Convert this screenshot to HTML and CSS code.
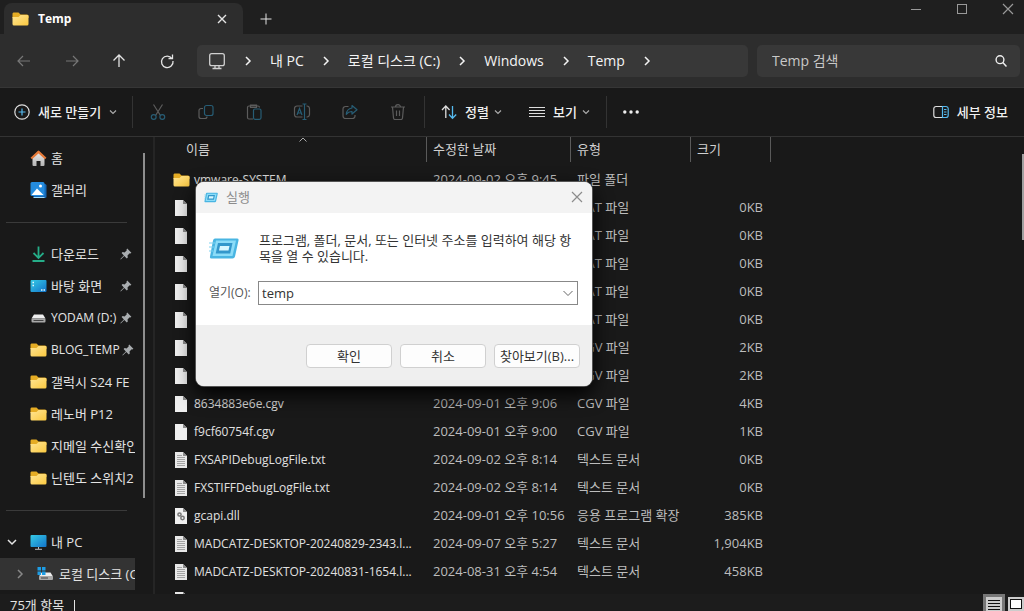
FILE: index.html
```
<!DOCTYPE html>
<html lang="ko">
<head>
<meta charset="utf-8">
<title>Temp</title>
<link rel="stylesheet" href="styles.css">
</head>
<body>
<svg class="defs" aria-hidden="true">
  <defs>
    <linearGradient id="gFolder" x1="0" y1="0" x2="1" y2="1"><stop offset="0" stop-color="#ffe594"/><stop offset="1" stop-color="#fbc940"/></linearGradient>
    <linearGradient id="gBlue" x1="0" y1="0" x2="1" y2="1"><stop offset="0" stop-color="#36cbe6"/><stop offset="1" stop-color="#1273c9"/></linearGradient>
    <linearGradient id="gHouse" x1="0" y1="0" x2="0" y2="1"><stop offset="0" stop-color="#efefef"/><stop offset="1" stop-color="#b4b4b4"/></linearGradient>
    <symbol id="folder" viewBox="0 0 17 14"><path d="M1.500 0.500h5l2 2h6.500a1.500 1.500 0 0 1 1.500 1.500v2h-16v-4a1.500 1.500 0 0 1 1-1.500z" fill="#e5ac24"/><path d="M0.500 5h6l2-2h7a1 1 0 0 1 1 1v8a1.500 1.500 0 0 1-1.500 1.500h-13a1.500 1.500 0 0 1-1.500-1.500z" fill="url(#gFolder)"/></symbol>
    <symbol id="file" viewBox="0 0 12 16"><path d="M0 0h8l4 4v12h-12z" fill="#efefef"/><path d="M8 0l4 4h-4z" fill="#8c8c8c"/></symbol>
    <symbol id="text" viewBox="0 0 12 16"><path d="M0 0h8l4 4v12h-12z" fill="#e8e8e8"/><path d="M8 0l4 4h-4z" fill="#8c8c8c"/><path d="M2 3.500h5M2 5.500h8M2 7.500h8M2 9.500h8M2 11.500h8M2 13.500h8" stroke="#a4a4a4" stroke-width="1"/></symbol>
    <symbol id="dll" viewBox="0 0 12 16"><path d="M0 0h8l4 4v12h-12z" fill="#efefef"/><path d="M8 0l4 4h-4z" fill="#8c8c8c"/><circle cx="4.500" cy="6.500" r="1.600" fill="none" stroke="#777" stroke-width="1.500" /><circle cx="7.500" cy="10" r="1.700" fill="none" stroke="#777" stroke-width="1.500"/></symbol>
    <symbol id="chev" viewBox="0 0 10 10"><path d="M3 1l4 4-4 4" fill="none" stroke="currentColor" stroke-width="1.500"/></symbol>
    <symbol id="down" viewBox="0 0 8 8"><path d="M1 2.500l3 3 3-3" fill="none" stroke="currentColor" stroke-width="1.200"/></symbol>
    <symbol id="x" viewBox="0 0 12 12"><path d="M1 1l10 10M11 1L1 11" fill="none" stroke="currentColor" stroke-width="1.200"/></symbol>
    <symbol id="pin" viewBox="0 0 12 12"><path d="M7.200 0.600l4.200 4.200-1 0.700-0.700-0.300-2.200 2.200 0.300 2-1 1-2.500-2.500-3.300 3.300-0.600 0.200 0.200-0.700 3.300-3.200-2.300-2.400 1-1 2 0.300 2.200-2.200-0.300-0.700z" fill="#a9adb0"/></symbol>
    <symbol id="run" viewBox="0 0 30 21"><path d="M6 0.500h22q2 0 1.500 2l-3.500 16q-0.500 2-2.500 2h-21q-2 0-1.500-2l3-16q0.500-2 2-2z" fill="#49b5e2"/><path d="M7 2.500h20l-3.500 15.500h-20z" fill="#8bdcf8"/><path d="M9 5h14.500l-2.300 10.500h-14.500z" fill="#3397cb"/><path d="M11 8h9.500l-1 4.500h-9.500z" fill="#d9f7ff"/><path d="M0 5h6M0 9h5M0 13h4" stroke="#7fd2f0"/></symbol>
  </defs>
</svg>

<div class="explorer">
  <header class="titlebar">
    <div class="tab">
      <svg class="folder-icon"><use href="#folder"/></svg>
      <span class="tab-title">Temp</span>
      <button class="plain tab-close" aria-label="탭 닫기"><svg class="icon-12" viewBox="0 0 12 12"><path d="M2 2l8 8M10 2l-8 8" stroke="currentColor" stroke-width="1.400"/></svg></button>
    </div>
    <button class="plain new-tab" aria-label="새 탭"><svg class="icon-12" viewBox="0 0 12 12"><path d="M6 0.500v11M0.500 6h11" stroke="currentColor"/></svg></button>
    <div class="window-controls">
      <button class="plain" aria-label="최소화"><svg class="icon-12" viewBox="0 0 12 12"><path d="M1 6.500h10" stroke="currentColor"/></svg></button>
      <button class="plain" aria-label="최대화"><svg class="icon-12" viewBox="0 0 12 12"><rect x="1.500" y="1.500" width="9" height="9" fill="none" stroke="currentColor"/></svg></button>
      <button class="plain" aria-label="닫기"><svg class="icon-12"><use href="#x"/></svg></button>
    </div>
  </header>

  <nav class="navbar">
    <div class="nav-buttons">
      <button class="plain dim" aria-label="뒤로"><svg class="icon-16" viewBox="0 0 16 16"><path d="M14 8H2M7 3L2 8l5 5" fill="none" stroke="currentColor" stroke-width="1.200"/></svg></button>
      <button class="plain dim" aria-label="앞으로"><svg class="icon-16" viewBox="0 0 16 16"><path d="M2 8h12M9 3l5 5-5 5" fill="none" stroke="currentColor" stroke-width="1.200"/></svg></button>
      <button class="plain" aria-label="위로"><svg class="icon-16" viewBox="0 0 16 16"><path d="M8 14V2M2.500 7.500L8 2l5.500 5.500" fill="none" stroke="currentColor" stroke-width="1.300"/></svg></button>
      <button class="plain" aria-label="새로 고침"><svg class="icon-16" viewBox="0 0 16 16"><path d="M13 5.500A5.800 5.800 0 1 0 14 8M13.500 1.500v4h-4" fill="none" stroke="currentColor" stroke-width="1.300"/></svg></button>
    </div>
    <div class="address">
      <svg class="icon-18" viewBox="0 0 18 18"><rect x="1.700" y="1.700" width="14.600" height="12" rx="2" fill="none" stroke="#d0d0d0" stroke-width="1.300"/><path d="M7 14v2.500M11 14v2.500M4.500 16.500h9" stroke="#d0d0d0" stroke-width="1.300"/></svg>
      <svg class="icon-10"><use href="#chev"/></svg>
      <a href="#pc">내 PC</a>
      <svg class="icon-10"><use href="#chev"/></svg>
      <a href="#c">로컬 디스크 (C:)</a>
      <svg class="icon-10"><use href="#chev"/></svg>
      <a href="#windows">Windows</a>
      <svg class="icon-10"><use href="#chev"/></svg>
      <a href="#temp">Temp</a>
      <svg class="icon-10"><use href="#chev"/></svg>
    </div>
    <div class="search">
      <input type="text" placeholder="Temp 검색" aria-label="Temp 검색">
      <svg class="icon-12" viewBox="0 0 12 12"><circle cx="5" cy="4.700" r="3.900" fill="none" stroke="#eee" stroke-width="1.400"/><path d="M7.800 7.500L11.500 11.500" stroke="#eee" stroke-width="1.500"/></svg>
    </div>
  </nav>

  <div class="toolbar">
    <button class="plain tool new">
      <svg class="icon-16" viewBox="0 0 16 16"><circle cx="8" cy="8" r="7.200" fill="none" stroke="#ddd" stroke-width="1.200"/><path d="M8 4.500v7M4.500 8h7" stroke="#55b9ee" stroke-width="1.200"/></svg>
      <span>새로 만들기</span><svg class="icon-8"><use href="#down"/></svg>
    </button>
    <div class="tool-icons">
      <button class="plain" aria-label="잘라내기"><svg class="icon-16" viewBox="0 0 16 16" fill="none"><path d="M3.500 0.500l6.800 10.800M12.500 0.500L5.700 11.300" stroke="#5c5c5c" stroke-width="1.200"/><circle cx="3.700" cy="13" r="2.400" stroke="#275d75" stroke-width="1.200"/><circle cx="12.300" cy="13" r="2.400" stroke="#275d75" stroke-width="1.200"/></svg></button>
      <button class="plain" aria-label="복사"><svg class="icon-16" viewBox="0 0 16 16" fill="none" stroke-width="1.200"><path d="M5 4.500H3A2 2 0 0 0 1 6.500v6a2 2 0 0 0 2 2h4a2 2 0 0 0 2-2" stroke="#5c5c5c"/><rect x="6.500" y="1.500" width="8.500" height="10" rx="2" stroke="#275d75"/></svg></button>
      <button class="plain" aria-label="붙여넣기"><svg class="icon-16" viewBox="0 0 16 16" fill="none" stroke-width="1.200"><path d="M7 15H3a1.500 1.500 0 0 1-1.500-1.500v-10A1.500 1.500 0 0 1 3 2h9q1.500 0 1.500 1.500M4.500 3.500v-2.500h6v2.500z" stroke="#5c5c5c"/><rect x="7.500" y="5" width="7.500" height="10.300" rx="1.500" stroke="#275d75"/></svg></button>
      <button class="plain" aria-label="이름 바꾸기"><svg class="icon-18" viewBox="0 0 18 18" fill="none" stroke-width="1.200"><path d="M9.500 3H4A2.500 2.500 0 0 0 1.500 5.500v6A2.500 2.500 0 0 0 4 14h5.500M13.500 3A2.800 2.800 0 0 1 16.500 5.500v6a2.800 2.800 0 0 1-3 2.500" stroke="#5c5c5c"/><path d="M11.500 1v15.500M9.500 1h4M9.500 16.500h4M4 12l2.500-6.500L9 12M5 10h3" stroke="#275d75"/></svg></button>
      <button class="plain" aria-label="공유"><svg class="icon-16" viewBox="0 0 16 16" fill="none" stroke-width="1.200"><path d="M6.500 2.500H3.500a2.500 2.500 0 0 0-2.500 2.500v7A2.500 2.500 0 0 0 3.500 14.500h7a2.500 2.500 0 0 0 2.500-2.500v-1" stroke="#5c5c5c"/><path d="M10 1.500l5 4.300-5 4.200V7.500Q6.500 7.300 4.300 10.300Q4.700 4.800 10 4z" stroke="#275d75" stroke-linejoin="round"/></svg></button>
      <button class="plain" aria-label="삭제"><svg class="icon-16" viewBox="0 0 16 16" fill="none" stroke="#5c5c5c" stroke-width="1.200"><path d="M1 3h14M5.500 3a2.500 2.300 0 0 1 5 0M2.500 3l1 11q0.200 1.500 1.500 1.500h6q1.300 0 1.500-1.500l1-11M6.500 6.500v5.500M9.500 6.500v5.500"/></svg></button>
    </div>
    <div class="tool-menus">
      <button class="plain tool"><svg class="icon-16" viewBox="0 0 16 16" fill="none" stroke-width="1.300"><path d="M4.800 14V2M1 6l3.800-4 3.800 4" stroke="#ddd"/><path d="M11.500 2v12M8 10.500l3.500 3.700 3.700-3.700" stroke="#55b9ee"/></svg><span>정렬</span><svg class="icon-8"><use href="#down"/></svg></button>
      <button class="plain tool"><svg class="icon-16" viewBox="0 0 16 16"><path d="M0 3.500h16M0 6.500h16M0 9.500h16M0 12.500h16" stroke="#ddd"/></svg><span>보기</span><svg class="icon-8"><use href="#down"/></svg></button>
    </div>
    <button class="plain more" aria-label="자세히"><svg class="icon-16" viewBox="0 0 16 16"><circle cx="1.800" cy="8" r="1.700" fill="#eee"/><circle cx="8" cy="8" r="1.700" fill="#eee"/><circle cx="14.200" cy="8" r="1.700" fill="#eee"/></svg></button>
    <button class="plain tool details"><svg class="icon-16" viewBox="0 0 16 16" fill="none" stroke-width="1.200"><path d="M9 2.500H3A2.200 2.200 0 0 0 0.800 4.700v6.600A2.200 2.200 0 0 0 3 13.500h6" stroke="#ddd"/><path d="M9.500 2.500h3.500a2.200 2.200 0 0 1 2.200 2.200v6.600a2.200 2.200 0 0 1-2.200 2.200H9.500zM11 5.500h2.500M11 8h2.500M11 10.500h2.500" stroke="#55b9ee"/></svg><span>세부 정보</span></button>
  </div>

  <main class="content">
    <aside class="sidebar">
      <div class="tree">
        <a class="side" href="#home"><svg class="side-icon" viewBox="0 0 16 16"><path d="M2 7l6-6 6 6v8a1 1 0 0 1-1 1H10v-5H6v5H3a1 1 0 0 1-1-1z" fill="url(#gHouse)"/><path d="M0.800 8.500L8 1.800l7.200 6.700" fill="none" stroke="#e57938" stroke-width="2.300" stroke-linejoin="round"/></svg><span>홈</span></a>
        <a class="side" href="#gallery"><svg class="side-icon" viewBox="0 0 16 16"><rect x="3" y="2" width="13" height="14" rx="1.500" fill="#1567b5"/><rect x="0" y="0" width="14" height="14" rx="1.500" fill="#248cdf"/><path d="M1 13l5.500-6.500L13 13z" fill="#fff"/><circle cx="10" cy="4" r="1.500" fill="#fff"/><path d="M3 15.500h11" stroke="#9edcff"/></svg><span>갤러리</span></a>
        <hr>
        <a class="side" href="#downloads"><svg class="side-icon" viewBox="0 0 16 16"><path d="M8 0.500v11M3 7l5 5 5-5M2 15h12" fill="none" stroke="#25ad88" stroke-width="1.800"/></svg><span>다운로드</span><svg class="pin"><use href="#pin"/></svg></a>
        <a class="side" href="#desktop"><svg class="side-icon" viewBox="0 0 16 16"><rect y="2" width="16" height="12" rx="1" fill="url(#gBlue)"/><path d="M2 4.500h1.500M2 7.500h1.500M10.500 12h1.500M13 12h1.500" stroke="#e4f8ff" stroke-width="1.500"/></svg><span>바탕 화면</span><svg class="pin"><use href="#pin"/></svg></a>
        <a class="side latin" href="#d"><svg class="side-icon" viewBox="0 0 16 16"><path d="M3.500 4.500h9l2.500 4H1z" fill="#eee"/><rect x="1" y="8.500" width="14" height="4" rx="1" fill="#a8a8a8"/><path d="M3 10.500h10" stroke="#444"/></svg><span>YODAM (D:)</span><svg class="pin"><use href="#pin"/></svg></a>
        <a class="side latin" href="#blog"><svg class="folder-icon"><use href="#folder"/></svg><span>BLOG_TEMP</span><svg class="pin"><use href="#pin"/></svg></a>
        <a class="side" href="#s24"><svg class="folder-icon"><use href="#folder"/></svg><span>갤럭시 S24 FE</span></a>
        <a class="side" href="#p12"><svg class="folder-icon"><use href="#folder"/></svg><span>레노버 P12</span></a>
        <a class="side" href="#mail"><svg class="folder-icon"><use href="#folder"/></svg><span>지메일 수신확인</span></a>
        <a class="side" href="#switch"><svg class="folder-icon"><use href="#folder"/></svg><span>닌텐도 스위치2</span></a>
        <hr>
        <a class="side root" href="#pc"><svg class="icon-10 open"><use href="#chev"/></svg><svg class="side-icon" viewBox="0 0 16 16"><rect y="1" width="16" height="12" rx="1" fill="url(#gBlue)"/><path d="M8 13v2M4.500 15.300h7" stroke="#bbb"/></svg><span>내 PC</span></a>
        <a class="side child selected" href="#c"><svg class="icon-10"><use href="#chev"/></svg><svg class="side-icon" viewBox="0 0 16 16"><path d="M4 6.500h9l2.500 4H1.500z" fill="#eee"/><rect x="1.500" y="10" width="14" height="4" rx="1" fill="#a8a8a8"/><path d="M3.500 12h7" stroke="#444"/><path d="M0 1h3.500v3.500H0zM4.500 1H8v3.500H4.500zM0 5.500h3.500V9H0zM4.500 5.500H8V9H4.500z" fill="#1d9de5"/></svg><span>로컬 디스크 (C:)</span></a>
      </div>
      <div class="side-scroll"></div>
    </aside>

    <div class="files">
      <table>
        <colgroup><col class="c-name"><col class="c-date"><col class="c-type"><col class="c-size"></colgroup>
        <thead><tr>
          <th class="name-head"><div>이름<svg class="sort" viewBox="0 0 8 5"><path d="M0.500 4.500L4 1l3.500 3.500" fill="none" stroke="#aaa"/></svg></div></th>
          <th><div>수정한 날짜</div></th><th><div>유형</div></th><th><div>크기</div></th>
        </tr></thead>
        <tbody>
          <tr><td><div class="name"><svg class="folder-icon"><use href="#folder"/></svg><span>vmware-SYSTEM</span></div></td><td>2024-09-02 오후 9:45</td><td>파일 폴더</td><td></td></tr>
          <tr><td><div class="name"><svg class="file-icon"><use href="#file"/></svg></div></td><td></td><td>DAT 파일</td><td>0KB</td></tr>
          <tr><td><div class="name"><svg class="file-icon"><use href="#file"/></svg></div></td><td></td><td>DAT 파일</td><td>0KB</td></tr>
          <tr><td><div class="name"><svg class="file-icon"><use href="#file"/></svg></div></td><td></td><td>DAT 파일</td><td>0KB</td></tr>
          <tr><td><div class="name"><svg class="file-icon"><use href="#file"/></svg></div></td><td></td><td>DAT 파일</td><td>0KB</td></tr>
          <tr><td><div class="name"><svg class="file-icon"><use href="#file"/></svg></div></td><td></td><td>DAT 파일</td><td>0KB</td></tr>
          <tr><td><div class="name"><svg class="file-icon"><use href="#file"/></svg></div></td><td></td><td>CGV 파일</td><td>2KB</td></tr>
          <tr><td><div class="name"><svg class="file-icon"><use href="#file"/></svg></div></td><td></td><td>CGV 파일</td><td>2KB</td></tr>
          <tr><td><div class="name"><svg class="file-icon"><use href="#file"/></svg><span>8634883e6e.cgv</span></div></td><td>2024-09-01 오후 9:06</td><td>CGV 파일</td><td>4KB</td></tr>
          <tr><td><div class="name"><svg class="file-icon"><use href="#file"/></svg><span>f9cf60754f.cgv</span></div></td><td>2024-09-01 오후 9:00</td><td>CGV 파일</td><td>1KB</td></tr>
          <tr><td><div class="name"><svg class="file-icon"><use href="#text"/></svg><span>FXSAPIDebugLogFile.txt</span></div></td><td>2024-09-02 오후 8:14</td><td>텍스트 문서</td><td>0KB</td></tr>
          <tr><td><div class="name"><svg class="file-icon"><use href="#text"/></svg><span>FXSTIFFDebugLogFile.txt</span></div></td><td>2024-09-02 오후 8:14</td><td>텍스트 문서</td><td>0KB</td></tr>
          <tr><td><div class="name"><svg class="file-icon"><use href="#dll"/></svg><span>gcapi.dll</span></div></td><td>2024-09-01 오후 10:56</td><td>응용 프로그램 확장</td><td>385KB</td></tr>
          <tr><td><div class="name"><svg class="file-icon"><use href="#text"/></svg><span>MADCATZ-DESKTOP-20240829-2343.l...</span></div></td><td>2024-09-07 오후 5:27</td><td>텍스트 문서</td><td>1,904KB</td></tr>
          <tr><td><div class="name"><svg class="file-icon"><use href="#text"/></svg><span>MADCATZ-DESKTOP-20240831-1654.l...</span></div></td><td>2024-08-31 오후 4:54</td><td>텍스트 문서</td><td>458KB</td></tr>
          <tr><td><div class="name"><svg class="file-icon"><use href="#text"/></svg></div></td><td></td><td></td><td></td></tr>
        </tbody>
      </table>
      <div class="file-scroll"></div>
    </div>
  </main>

  <footer class="status">
    <span>75개 항목</span><i class="caret"></i>
    <div class="views">
      <button class="plain view active" aria-label="자세히 보기"><svg class="icon-16" viewBox="0 0 16 16"><rect width="16" height="16" fill="#ccc"/><path d="M2 3.500h12M2 6.500h12M2 9.500h12M2 12.500h12" stroke="#111"/></svg></button>
      <button class="plain view" aria-label="큰 아이콘"><svg class="icon-16" viewBox="0 0 16 16"><rect width="16" height="16" fill="#ccc"/><rect x="2.500" y="2.500" width="11" height="9" fill="#fff" stroke="#111"/></svg></button>
    </div>
  </footer>
</div>

<section class="dialog" role="dialog" aria-labelledby="run-title">
  <header class="dialog-title">
    <svg class="run-small"><use href="#run"/></svg><span id="run-title">실행</span>
    <button class="plain" aria-label="닫기"><svg class="icon-12"><use href="#x"/></svg></button>
  </header>
  <div class="dialog-body">
    <div class="message"><svg class="run-large"><use href="#run"/></svg><p>프로그램, 폴더, 문서, 또는 인터넷 주소를 입력하여 해당 항<br>목을 열 수 있습니다.</p></div>
    <div class="field"><label for="open">열기(O):</label>
      <div class="combo"><input id="open" type="text" value="temp"><button class="plain" aria-label="목록"><svg class="icon-12" viewBox="0 0 12 12"><path d="M1.500 4L6 8.500 10.500 4" fill="none" stroke="#666"/></svg></button></div>
    </div>
  </div>
  <div class="dialog-foot"><button>확인</button><button>취소</button><button>찾아보기(B)...</button></div>
</section>
</body>
</html>
```
FILE: styles.css
```
* { box-sizing: border-box; }
body {
  margin: 0;
  background: #191919;
  color: #e4e4e4;
  font: 13px/20px "Open Sans", "Noto Sans CJK KR", sans-serif;
  overflow: hidden;
}
button, input { font: inherit; color: inherit; }
a { color: inherit; text-decoration: none; }
svg { display: block; flex: none; }
.defs { position: absolute; width: 0; height: 0; }
.plain {
  border: 0;
  padding: 0;
  background: none;
  display: flex;
  align-items: center;
  justify-content: center;
}
.icon-8 { width: 8px; height: 8px; }
.icon-10 { width: 10px; height: 10px; }
.icon-12 { width: 12px; height: 12px; }
.icon-16 { width: 16px; height: 16px; }
.icon-18 { width: 18px; height: 18px; }
.folder-icon { width: 17px; height: 14px; }
.file-icon { width: 12px; height: 16px; margin: 0 3px 0 2px; }

.explorer {
  height: 100vh;
  display: grid;
  grid-template-rows: 34px 54px 49px minmax(0, 1fr) 17px;
}

.titlebar { display: flex; background: #1f1f1f; }
.tab {
  width: 239px;
  margin: 3px 0 0 4px;
  padding: 0 15px 0 8px;
  display: flex;
  align-items: center;
  gap: 9px;
  border-radius: 8px 8px 0 0;
  background: #2d2d2d;
}
.tab-title { flex: 1; font-size: 12px; font-weight: 700; color: #fff; }
.new-tab { width: 46px; padding-top: 3px; }
.window-controls { margin-left: auto; height: 18px; display: flex; color: #999; }
.window-controls button { width: 46px; }
.window-controls button:last-child { width: 39px; padding-left: 7px; }

.navbar {
  display: flex;
  align-items: center;
  padding-right: 4px;
  background: #2d2d2d;
  border-bottom: 1px solid #363636;
}
.nav-buttons { flex: none; width: 197px; display: flex; padding-right: 6px; }
.nav-buttons button { width: 48px; }
.nav-buttons .dim { color: #777; }
.address {
  flex: 2 1 551px;
  height: 32px;
  display: flex;
  align-items: center;
  gap: 17px;
  padding-left: 11px;
  border-radius: 5px;
  background: #383838;
  white-space: nowrap;
  color: #f4f4f4;
}
.address a { font-size: 14px; }
.search {
  flex: 1 1 263px;
  margin-left: 9px;
  height: 32px;
  display: flex;
  align-items: center;
  padding: 0 13px 0 15px;
  border-radius: 5px;
  background: #383838;
}
.search input { flex: 1; min-width: 0; padding: 0; border: 0; outline: 0; background: none; font-size: 14px; }
.search input::placeholder { color: #c8c8c8; opacity: 1; }

.toolbar { display: flex; align-items: center; border-bottom: 1px solid #333; font-weight: 500; color: #f0f0f0; }
.tool { gap: 8px; white-space: nowrap; }
.tool .icon-8 { color: #aaa; }
.new { width: 133px; height: 32px; padding-left: 14px; justify-content: flex-start; border-right: 1px solid #333; }
.tool-icons { display: flex; height: 32px; padding: 0 2px 0 1px; border-right: 1px solid #333; }
.tool-icons button { width: 48px; }
.tool-menus { display: flex; height: 32px; gap: 27px; padding: 0 16px; border-right: 1px solid #333; }
.tool-menus .icon-8 { margin-left: -3px; }
.more { width: 48px; }
.details { margin-left: auto; padding-right: 16px; }

.content { display: flex; min-height: 0; overflow: hidden; }
.sidebar { width: 155px; flex: none; display: flex; border-right: 2px solid #252525; padding-top: 5px; }
.tree { width: 135px; overflow: hidden; }
.side { height: 32px; display: flex; align-items: center; gap: 4px; padding-left: 30px; white-space: nowrap; }
.latin { font-size: 12px; }
.side-icon { width: 17px; height: 16px; }
.side:has(.pin) { padding-right: 3px; }
.side .pin { width: 12px; height: 12px; margin-left: auto; }
.latin .pin { margin-left: -2px; }
.latin span { flex: 1; }
.tree hr { height: 1px; margin: 16px 8px 15px 6px; border: 0; background: #3a3a3a; }
.root { padding-left: 7px; gap: 4px; }
.root .open { transform: rotate(90deg); margin-right: 9px; }
.child { padding-left: 15px; gap: 5px; }
.child .icon-10 { color: #888; margin-right: 7px; }
.selected { background: #333; }
.side-scroll { width: 2px; height: 345px; margin: 11px 0 0 8px; background: #8e8e8e; }

.files { flex: 1; min-width: 0; display: flex; justify-content: space-between; overflow: hidden; align-items: flex-start; }
table { table-layout: fixed; width: 616px; border-collapse: collapse; white-space: nowrap; }
.c-name { width: 272px; }
.c-date { width: 144px; }
.c-type { width: 120px; }
.c-size { width: 80px; }
th { padding: 0 0 4px; font-weight: 400; text-align: left; color: #d0d0d0; }
th div { height: 25px; line-height: 24px; padding-left: 6px; border-right: 1px solid #5a5a5a; position: relative; }
.name-head div { padding-left: 31px; }
.sort { position: absolute; left: 144px; top: 0; width: 8px; height: 5px; }
td { height: 28px; padding: 0 0 2px 6px; color: #bdbdbd; }
td:first-child { padding: 0 0 0 18px; color: #e0e0e0; }
td:last-child { padding: 0 8px 2px 0; text-align: right; }
.name { display: flex; align-items: center; gap: 4px; font-size: 12px; }
.file-scroll { width: 2px; height: 86px; margin-top: 17px; background: #a0a0a0; }

.status { display: flex; align-items: flex-start; padding-left: 10px; background: #1c1c1c; overflow: hidden; line-height: 22px; }
.caret { width: 1px; height: 12px; margin: 6px 0 0 10px; background: #e4e4e4; }
.views { margin-left: auto; display: flex; gap: 3px; }
.view { width: 16px; height: 22px; }
.views .active { background: #777; width: 22px; }

.dialog {
  position: absolute;
  left: 196px;
  top: 182px;
  width: 396px;
  border-radius: 8px;
  overflow: hidden;
  background: #fff;
  color: #333;
  box-shadow: 0 0 0 1px #555, 0 8px 20px #000;
}
.dialog-title { height: 31px; display: flex; align-items: center; gap: 8px; padding: 0 9px 1px 8px; background: #f3f3f3; color: #8c8c8c; }
.dialog-title button { margin-left: auto; }
.run-small { width: 14px; height: 11px; }
.run-large { width: 30px; height: 21px; }
.dialog-body { height: 112px; padding: 19px 14px 0 13px; }
.message { display: flex; align-items: center; gap: 20px; white-space: nowrap; }
.message p { margin: 0; line-height: 16px; }
.field { display: flex; align-items: center; margin-top: 17px; }
.field label { width: 49px; font-size: 12px; color: #555; }
.combo { flex: 1; height: 24px; display: flex; padding: 0 3px; border: 1px solid #888; }
.combo input { flex: 1; min-width: 0; padding: 0; border: 0; outline: 0; background: none; }
.dialog-foot { height: 61px; display: flex; justify-content: flex-end; align-items: flex-start; gap: 8px; padding: 19px 12px 0; background: #efefef; }
.dialog-foot button { width: 86px; height: 24px; padding: 0; border: 1px solid #d0d0d0; border-radius: 4px; background: #fdfdfd; font-size: 13px; line-height: 20px; white-space: nowrap; }
```
